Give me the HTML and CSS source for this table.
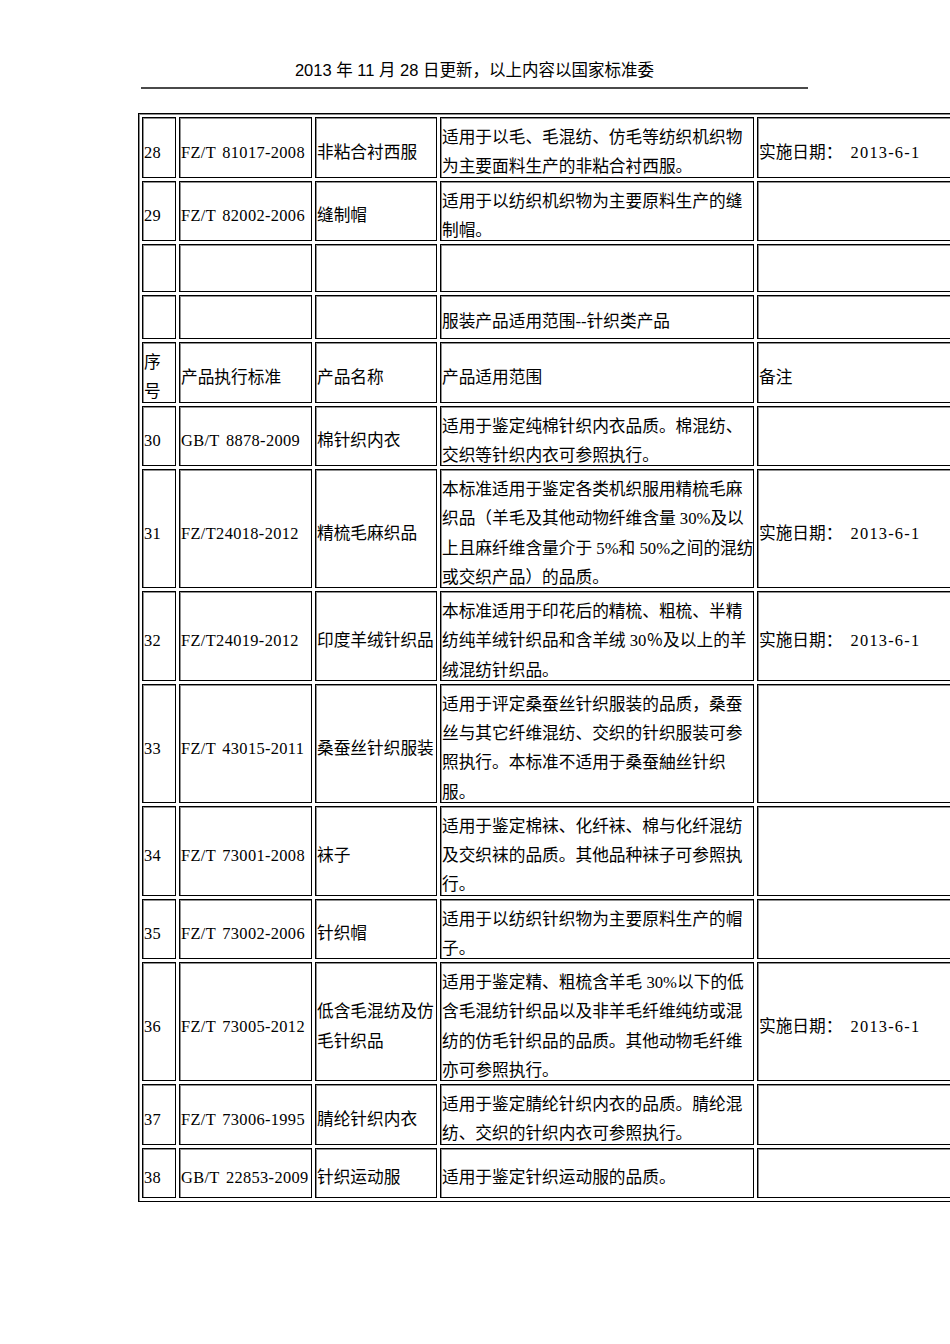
FILE: index.html
```html
<!DOCTYPE html>
<html lang="zh-CN">
<head>
<meta charset="utf-8">
<title>服装产品适用范围</title>
<link rel="stylesheet" href="styles.css">
</head>
<body>
<div class="page">
  <div class="doc-header">2013 年 11 月 28 日更新，以上内容以国家标准委</div>
  <div class="table-wrap">
    <table class="std-table">
      <colgroup>
        <col class="c1"><col class="c2"><col class="c3"><col class="c4"><col class="c5">
      </colgroup>
      <tr>
        <td><div class="txt code">28</div></td>
        <td><div class="txt code">FZ/T 81017-2008</div></td>
        <td><div class="txt">非粘合衬西服</div></td>
        <td><div class="txt">适用于以毛、毛混纺、仿毛等纺织机织物<br>为主要面料生产的非粘合衬西服。</div></td>
        <td><div class="txt">实施日期： <span class="code date">2013-6-1</span></div></td>
      </tr>
      <tr>
        <td><div class="txt code">29</div></td>
        <td><div class="txt code">FZ/T 82002-2006</div></td>
        <td><div class="txt">缝制帽</div></td>
        <td><div class="txt">适用于以纺织机织物为主要原料生产的缝<br>制帽。</div></td>
        <td></td>
      </tr>
      <tr class="r-empty">
        <td></td><td></td><td></td><td></td><td></td>
      </tr>
      <tr class="r-section">
        <td></td><td></td><td></td>
        <td><div class="txt">服装产品适用范围--针织类产品</div></td>
        <td></td>
      </tr>
      <tr>
        <td><div class="txt">序<br>号</div></td>
        <td><div class="txt">产品执行标准</div></td>
        <td><div class="txt">产品名称</div></td>
        <td><div class="txt">产品适用范围</div></td>
        <td><div class="txt">备注</div></td>
      </tr>
      <tr>
        <td><div class="txt code">30</div></td>
        <td><div class="txt code">GB/T 8878-2009</div></td>
        <td><div class="txt">棉针织内衣</div></td>
        <td><div class="txt">适用于鉴定纯棉针织内衣品质。棉混纺、<br>交织等针织内衣可参照执行。</div></td>
        <td></td>
      </tr>
      <tr>
        <td><div class="txt code">31</div></td>
        <td><div class="txt code">FZ/T24018-2012</div></td>
        <td><div class="txt">精梳毛麻织品</div></td>
        <td><div class="txt">本标准适用于鉴定各类机织服用精梳毛麻<br>织品（羊毛及其他动物纤维含量 30%及以<br>上且麻纤维含量介于 5%和 50%之间的混纺<br>或交织产品）的品质。</div></td>
        <td><div class="txt">实施日期： <span class="code date">2013-6-1</span></div></td>
      </tr>
      <tr>
        <td><div class="txt code">32</div></td>
        <td><div class="txt code">FZ/T24019-2012</div></td>
        <td><div class="txt">印度羊绒针织品</div></td>
        <td><div class="txt">本标准适用于印花后的精梳、粗梳、半精<br>纺纯羊绒针织品和含羊绒 30％及以上的羊<br>绒混纺针织品。</div></td>
        <td><div class="txt">实施日期： <span class="code date">2013-6-1</span></div></td>
      </tr>
      <tr>
        <td><div class="txt code">33</div></td>
        <td><div class="txt code">FZ/T 43015-2011</div></td>
        <td><div class="txt">桑蚕丝针织服装</div></td>
        <td><div class="txt">适用于评定桑蚕丝针织服装的品质，桑蚕<br>丝与其它纤维混纺、交织的针织服装可参<br>照执行。本标准不适用于桑蚕紬丝针织<br>服。</div></td>
        <td></td>
      </tr>
      <tr>
        <td><div class="txt code">34</div></td>
        <td><div class="txt code">FZ/T 73001-2008</div></td>
        <td><div class="txt">袜子</div></td>
        <td><div class="txt">适用于鉴定棉袜、化纤袜、棉与化纤混纺<br>及交织袜的品质。其他品种袜子可参照执<br>行。</div></td>
        <td></td>
      </tr>
      <tr>
        <td><div class="txt code">35</div></td>
        <td><div class="txt code">FZ/T 73002-2006</div></td>
        <td><div class="txt">针织帽</div></td>
        <td><div class="txt">适用于以纺织针织物为主要原料生产的帽<br>子。</div></td>
        <td></td>
      </tr>
      <tr>
        <td><div class="txt code">36</div></td>
        <td><div class="txt code">FZ/T 73005-2012</div></td>
        <td><div class="txt">低含毛混纺及仿<br>毛针织品</div></td>
        <td><div class="txt">适用于鉴定精、粗梳含羊毛 30%以下的低<br>含毛混纺针织品以及非羊毛纤维纯纺或混<br>纺的仿毛针织品的品质。其他动物毛纤维<br>亦可参照执行。</div></td>
        <td><div class="txt">实施日期： <span class="code date">2013-6-1</span></div></td>
      </tr>
      <tr>
        <td><div class="txt code">37</div></td>
        <td><div class="txt code">FZ/T 73006-1995</div></td>
        <td><div class="txt">腈纶针织内衣</div></td>
        <td><div class="txt">适用于鉴定腈纶针织内衣的品质。腈纶混<br>纺、交织的针织内衣可参照执行。</div></td>
        <td></td>
      </tr>
      <tr class="r-last">
        <td><div class="txt code">38</div></td>
        <td><div class="txt code">GB/T 22853-2009</div></td>
        <td><div class="txt">针织运动服</div></td>
        <td><div class="txt">适用于鉴定针织运动服的品质。</div></td>
        <td></td>
      </tr>
    </table>
  </div>
</div>
</body>
</html>
```
FILE: styles.css
```css
html, body {
  margin: 0;
  padding: 0;
  background: #ffffff;
}

.page {
  width: 950px;
  overflow: hidden;
}

.doc-header {
  margin-left: 141px;
  width: 667px;
  padding-top: 60px;
  padding-bottom: 7px;
  line-height: 20px;
  text-align: center;
  font-family: "Liberation Sans", "Noto Sans CJK SC", sans-serif;
  font-size: 16.5px;
  color: #000;
  border-bottom: 2px solid #4a4a4a;
}

.table-wrap {
  margin-top: 24px;
  margin-left: 138px;
  width: 812px;
  overflow: hidden;
}

.std-table {
  table-layout: fixed;
  width: 880px;
  border-collapse: separate;
  border-spacing: 3px;
  border: 1px solid #000;
  box-shadow: inset 1px 1px 0 #8a8a8a;
  font-family: "Liberation Serif", "Noto Sans CJK SC", serif;
  font-size: 16.7px;
  line-height: 29.25px;
  color: #000;
}

.c1 { width: 34px; }
.c2 { width: 133px; }
.c3 { width: 122px; }
.c4 { width: 314px; }
.c5 { width: 262px; }

.std-table td {
  box-sizing: border-box;
  border: 1px solid #000;
  box-shadow: inset 1px 1px 0 #8f8f8f;
  padding: 0 1px;
  vertical-align: middle;
  text-align: left;
  white-space: nowrap;
}

.txt {
  margin-top: 5px;
  margin-bottom: -5px;
}

.code {
  font-family: "Liberation Serif", serif;
  font-size: 16.4px;
  letter-spacing: 0.35px;
  word-spacing: 2px;
}

.date {
  margin-left: 4px;
  letter-spacing: 1.2px;
}

.r-empty td { height: 48px; }
.r-section td { height: 44px; }
.r-last td { height: 50px; }
```
